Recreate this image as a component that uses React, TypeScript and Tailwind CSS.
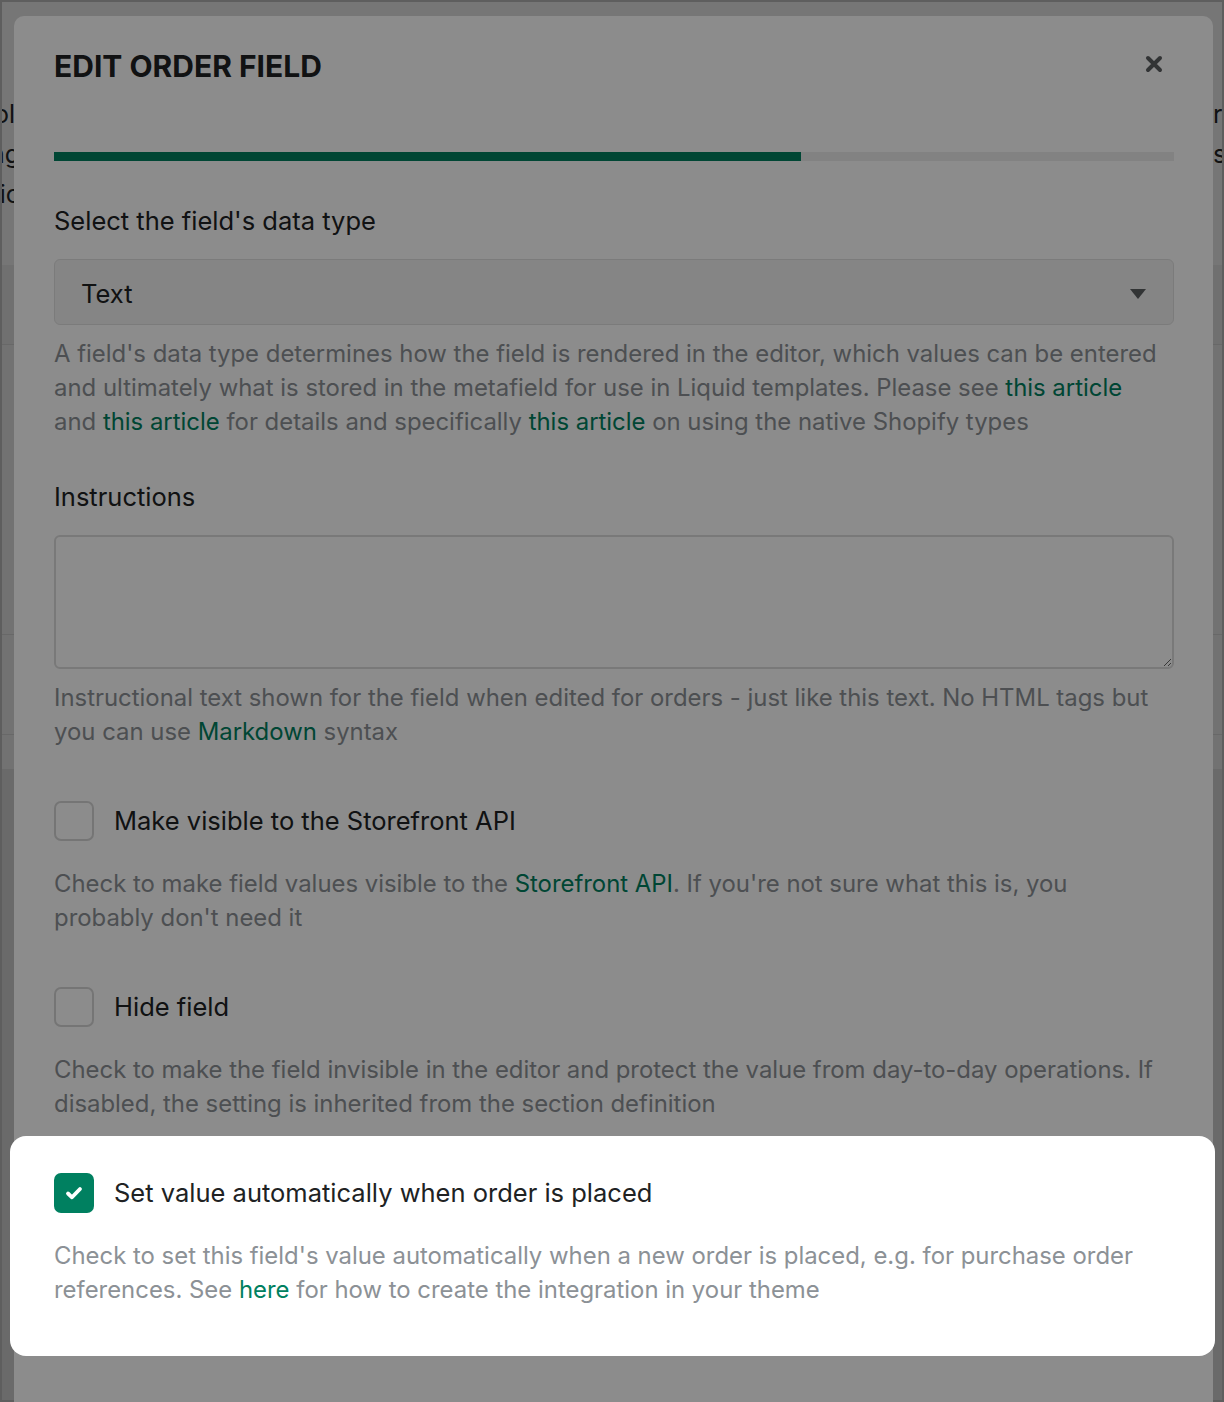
import React from "react";

const Link: React.FC<{ children: React.ReactNode }> = ({ children }) => (
  <a href="#" className="text-[#008060]">
    {children}
  </a>
);

const Checkbox: React.FC<{ checked?: boolean }> = ({ checked }) =>
  checked ? (
    <span className="flex h-[40px] w-[40px] shrink-0 items-center justify-center rounded-[7px] bg-[#008060]">
      <svg width="22" height="22" viewBox="0 0 22 22" fill="none">
        <path d="M5 11.5l4 3.8 8-8.3" stroke="#fff" strokeWidth="3.8" strokeLinecap="round" strokeLinejoin="round" />
      </svg>
    </span>
  ) : (
    <span className="h-[40px] w-[40px] shrink-0 rounded-[7px] border-2 border-[#d6d6d6] bg-white" />
  );

const App: React.FC = () => {
  return (
    <div className="relative h-[1402px] w-full overflow-hidden bg-[#ababab] p-[2px] font-['Inter','Liberation_Sans',sans-serif] text-[#202223]">
      {/* page behind the modal */}
      <div className="flex h-full flex-col bg-[#d8d8d8]">
        <div className="flex h-[263px] justify-between pt-[92px] text-[25px] leading-[40px]">
          <div className="flex w-[12px] flex-col items-end overflow-hidden whitespace-nowrap">
            <div className="-mr-[1px]">Control</div>
            <div className="-mr-[6px]">Showing</div>
            <div className="-mr-[6px]">Logic</div>
          </div>
          <div className="w-[10px] overflow-hidden whitespace-nowrap pl-[1px]">
            <div>required</div>
            <div>settings</div>
          </div>
        </div>
        <div className="h-[80px] border-b border-[#bdbdbd] bg-[#cdcdcd]" />
        <div className="h-[290px] border-b border-[#bdbdbd] bg-[#d0d0d0]" />
        <div className="h-[100px] border-b border-[#bdbdbd] bg-[#d0d0d0]" />
        <div className="h-[34px] bg-[#d0d0d0]" />
        <div className="flex-1 bg-[#c1c1c1]" />
      </div>

      {/* modal */}
      <div className="absolute left-[14px] top-[16px] h-[1420px] w-[1199px] rounded-t-[10px] bg-white pl-[40px] pr-[39px] pt-[33px]">
        <div className="flex items-center justify-between">
          <h2 className="text-[30px] font-bold leading-[34px]">EDIT ORDER FIELD</h2>
          <svg width="18" height="18" viewBox="0 0 18 18" className="mr-[11px] -mt-[4px]">
            <path d="M3 3l12 12M15 3L3 15" stroke="#5c5f62" strokeWidth="4" strokeLinecap="round" />
          </svg>
        </div>

        <div className="mt-[69px] h-[9px] w-full bg-[#ededed]">
          <div className="h-full w-[66.7%] bg-[#008060]" />
        </div>

        <div className="mt-[43px] text-[25.5px] leading-[34px]">Select the field's data type</div>
        <div className="mt-[21px] flex h-[66px] items-center justify-between rounded-[6px] border border-[#e1e1e1] bg-[#f2f2f2] pl-[26px] pr-[27px] text-[25.5px]">
          <span className="pt-[5px]">Text</span>
          <svg width="16" height="10" viewBox="0 0 16 10" className="mt-[4px]">
            <path d="M0 0h16L8 10z" fill="#5c5f62" />
          </svg>
        </div>
        <p className="mt-[12px] pr-[12px] text-[23.9px] leading-[34px] text-[#8c9196]">
          A field's data type determines how the field is rendered in the editor, which values can be entered and ultimately what
          is stored in the metafield for use in Liquid templates. Please see <Link>this article</Link> and <Link>this article</Link> for
          details and specifically <Link>this article</Link> on using the native Shopify types
        </p>

        <div className="mt-[41px] text-[25.5px] leading-[34px]">Instructions</div>
        <textarea className="mt-[21px] block h-[134px] w-full rounded-[6px] border-2 border-[#dcdcdc] bg-white" />
        <p className="mt-[12px] pr-[12px] text-[23.9px] leading-[34px] text-[#8c9196]">
          Instructional text shown for the field when edited for orders - just like this text. No HTML tags but you can use{" "}
          <Link>Markdown</Link> syntax
        </p>

        <div className="mt-[52px] flex items-center gap-[20px]">
          <Checkbox />
          <span className="text-[25.5px] leading-[34px]">Make visible to the Storefront API</span>
        </div>
        <p className="mt-[26px] pr-[12px] text-[23.9px] leading-[34px] text-[#8c9196]">
          Check to make field values visible to the <Link>Storefront API</Link>. If you're not sure what this is, you probably don't
          need it
        </p>

        <div className="mt-[52px] flex items-center gap-[20px]">
          <Checkbox />
          <span className="text-[25.5px] leading-[34px]">Hide field</span>
        </div>
        <p className="mt-[26px] pr-[12px] text-[23.9px] leading-[34px] text-[#8c9196]">
          Check to make the field invisible in the editor and protect the value from day-to-day operations. If disabled, the setting
          is inherited from the section definition
        </p>

        {/* highlighted step */}
        <div className="relative z-20 -ml-[44px] -mr-[41px] mt-[15px] rounded-[16px] bg-white pb-[49px] pl-[44px] pr-[41px] pt-[37px]">
          <div className="flex items-center gap-[20px]">
            <Checkbox checked />
            <span className="text-[25.5px] leading-[34px]">Set value automatically when order is placed</span>
          </div>
          <p className="mt-[26px] pr-[12px] text-[23.9px] leading-[34px] text-[#8c9196]">
            Check to set this field's value automatically when a new order is placed, e.g. for purchase order references. See{" "}
            <Link>here</Link> for how to create the integration in your theme
          </p>
        </div>
      </div>

      {/* dimming overlay */}
      <div className="absolute inset-0 z-10 bg-black/45" />
    </div>
  );
};

export default App;
